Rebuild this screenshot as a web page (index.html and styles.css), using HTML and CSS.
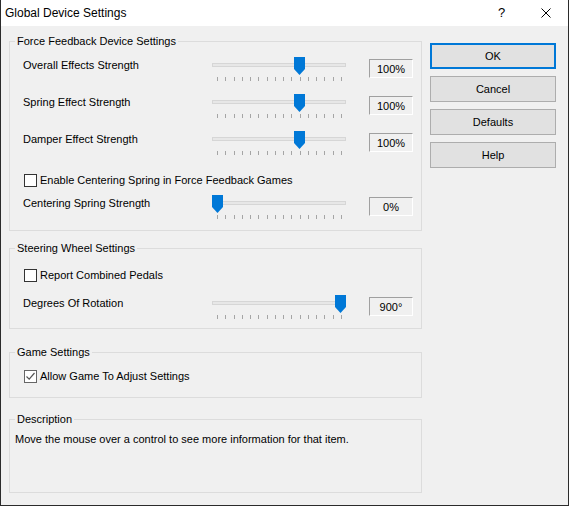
FILE: index.html
```html
<!DOCTYPE html>
<html>
<head>
<meta charset="utf-8">
<title>Global Device Settings</title>
<link rel="stylesheet" href="styles.css">
</head>
<body>
<div class="window">
  <div class="titlebar">
    <span class="title">Global Device Settings</span>
    <span class="help">?</span>
    <svg class="close" width="10" height="10" viewBox="0 0 10 10"><path d="M0.5 0.5 L9.5 9.5 M9.5 0.5 L0.5 9.5" stroke="#000" stroke-width="1" fill="none"/></svg>
  </div>
  <div class="body">
    <div class="groups">
      <fieldset class="group group-ff">
        <legend>Force Feedback Device Settings</legend>
        <div class="slider-row first">
          <span class="label">Overall Effects Strength</span>
          <div class="slider">
            <div class="track"></div>
            <div class="ticks"><i></i><i></i><i></i><i></i><i></i><i></i><i></i><i></i><i></i><i></i><i></i><i></i><i></i><i></i><i></i><i></i></div>
            <svg class="thumb" style="left:82px" width="11" height="18" viewBox="0 0 11 18"><polygon points="0,0 11,0 11,12 5.5,18 0,12" fill="#0078d7"/></svg>
          </div>
          <div class="value">100%</div>
        </div>
        <div class="slider-row next">
          <span class="label">Spring Effect Strength</span>
          <div class="slider">
            <div class="track"></div>
            <div class="ticks"><i></i><i></i><i></i><i></i><i></i><i></i><i></i><i></i><i></i><i></i><i></i><i></i><i></i><i></i><i></i><i></i></div>
            <svg class="thumb" style="left:82px" width="11" height="18" viewBox="0 0 11 18"><polygon points="0,0 11,0 11,12 5.5,18 0,12" fill="#0078d7"/></svg>
          </div>
          <div class="value">100%</div>
        </div>
        <div class="slider-row next">
          <span class="label">Damper Effect Strength</span>
          <div class="slider">
            <div class="track"></div>
            <div class="ticks"><i></i><i></i><i></i><i></i><i></i><i></i><i></i><i></i><i></i><i></i><i></i><i></i><i></i><i></i><i></i><i></i></div>
            <svg class="thumb" style="left:82px" width="11" height="18" viewBox="0 0 11 18"><polygon points="0,0 11,0 11,12 5.5,18 0,12" fill="#0078d7"/></svg>
          </div>
          <div class="value">100%</div>
        </div>
        <label class="check-row ff-check"><span class="box"></span>Enable Centering Spring in Force Feedback Games</label>
        <div class="slider-row after-check">
          <span class="label">Centering Spring Strength</span>
          <div class="slider">
            <div class="track"></div>
            <div class="ticks"><i></i><i></i><i></i><i></i><i></i><i></i><i></i><i></i><i></i><i></i><i></i><i></i><i></i><i></i><i></i><i></i></div>
            <svg class="thumb" style="left:0px" width="11" height="18" viewBox="0 0 11 18"><polygon points="0,0 11,0 11,12 5.5,18 0,12" fill="#0078d7"/></svg>
          </div>
          <div class="value">0%</div>
        </div>
      </fieldset>

      <fieldset class="group group-wheel">
        <legend>Steering Wheel Settings</legend>
        <label class="check-row wheel-check"><span class="box"></span>Report Combined Pedals</label>
        <div class="slider-row wheel-slider">
          <span class="label">Degrees Of Rotation</span>
          <div class="slider">
            <div class="track"></div>
            <div class="ticks"><i></i><i></i><i></i><i></i><i></i><i></i><i></i><i></i><i></i><i></i><i></i><i></i><i></i><i></i><i></i><i></i></div>
            <svg class="thumb" style="left:123px" width="11" height="18" viewBox="0 0 11 18"><polygon points="0,0 11,0 11,12 5.5,18 0,12" fill="#0078d7"/></svg>
          </div>
          <div class="value">900°</div>
        </div>
      </fieldset>

      <fieldset class="group group-game">
        <legend>Game Settings</legend>
        <label class="check-row game-check"><span class="box checked"><svg width="11" height="11" viewBox="0 0 11 11"><path d="M1.5 5.5 L4.2 8.2 L9.5 2" stroke="#555" stroke-width="1.2" fill="none"/></svg></span>Allow Game To Adjust Settings</label>
      </fieldset>

      <fieldset class="group group-desc">
        <legend>Description</legend>
        <p class="desc-text">Move the mouse over a control to see more information for that item.</p>
      </fieldset>
    </div>

    <div class="buttons">
      <button class="btn default">OK</button>
      <button class="btn">Cancel</button>
      <button class="btn">Defaults</button>
      <button class="btn">Help</button>
    </div>
  </div>
</div>
</body>
</html>
```

FILE: styles.css
```css
html, body {
  margin: 0;
  padding: 0;
  background: #f0f0f0;
}

body {
  font-family: "Liberation Sans", Arial, sans-serif;
  font-size: 11px;
  color: #000;
}

.window {
  width: 569px;
  height: 506px;
  box-sizing: border-box;
  border: 1px solid #2b2b2b;
  border-top: none;
  background: #f0f0f0;
  display: flex;
  flex-direction: column;
}

.titlebar {
  height: 26px;
  flex: none;
  background: #fff;
  display: flex;
  align-items: center;
  padding-left: 4px;
  line-height: 16px;
}

.title {
  font-size: 12px;
  flex: 1;
}

.help {
  width: 10px;
  margin-right: 33px;
  font-size: 13px;
}

.close {
  margin-right: 17px;
  display: block;
}

.body {
  display: flex;
  padding: 8px 0 0 8px;
}

.groups {
  width: 413px;
  display: flex;
  flex-direction: column;
}

.group {
  margin: 0;
  padding: 0 0 0 5px;
  border: 1px solid #dcdcdc;
  min-width: 0;
}

.group legend {
  padding: 0 2px;
  margin-left: 0;
  line-height: 15px;
  height: 15px;
}

.group-ff { padding-bottom: 11px; }
.group-wheel { margin-top: 10px; padding-bottom: 9px; }
.group-game { margin-top: 16px; padding-bottom: 13px; }
.group-desc { margin-top: 14px; }

.slider-row {
  display: flex;
  align-items: flex-start;
  height: 24px;
  padding-left: 8px;
}

.slider-row.first { margin-top: 8px; }
.slider-row.next { margin-top: 13px; }
.slider-row.after-check { margin-top: 7px; }
.slider-row.wheel-slider { margin-top: 12px; }

.label {
  width: 189px;
  line-height: 17px;
  flex: none;
}

.slider {
  position: relative;
  width: 134px;
  height: 24px;
  flex: none;
}

.track {
  position: absolute;
  left: 0;
  top: 6px;
  width: 134px;
  height: 4px;
  box-sizing: border-box;
  border: 1px solid #d6d6d6;
  background: #e7e7e7;
}

.ticks {
  position: absolute;
  left: 5px;
  top: 20px;
  width: 125px;
  height: 4px;
  display: flex;
  justify-content: space-between;
}

.ticks i {
  display: block;
  width: 1px;
  height: 4px;
  background: #a5a5a5;
}

.thumb {
  position: absolute;
  top: 0;
  display: block;
}

.value {
  margin-left: 23px;
  margin-top: 2px;
  width: 44px;
  height: 19px;
  box-sizing: border-box;
  border: 1px solid #a0a0a0;
  border-right-color: #fff;
  border-bottom-color: #fff;
  text-align: center;
  line-height: 18px;
  flex: none;
}

.check-row {
  display: flex;
  align-items: center;
  height: 16px;
  line-height: 16px;
  padding-left: 9px;
}

.ff-check { margin-top: 17px; }
.wheel-check { margin-top: 11px; }
.game-check { margin-top: 8px; }

.box {
  width: 13px;
  height: 13px;
  box-sizing: border-box;
  border: 1px solid #333;
  background: #fff;
  margin-right: 3px;
  flex: none;
  display: flex;
  align-items: center;
  justify-content: center;
}

.box.checked {
  border-color: #666;
}

.box svg { display: block; }

.desc-text {
  margin: 4px 0 0 0;
  line-height: 16px;
  min-height: 61px;
}

.buttons {
  margin-left: 8px;
  margin-top: 9px;
  display: flex;
  flex-direction: column;
  gap: 7px;
}

.btn {
  width: 126px;
  height: 26px;
  box-sizing: border-box;
  border: 1px solid #adadad;
  background: #e1e1e1;
  font-family: inherit;
  font-size: 11px;
  color: #000;
  padding: 0;
  margin: 0;
}

.btn.default {
  border: 2px solid #0078d7;
}
```
